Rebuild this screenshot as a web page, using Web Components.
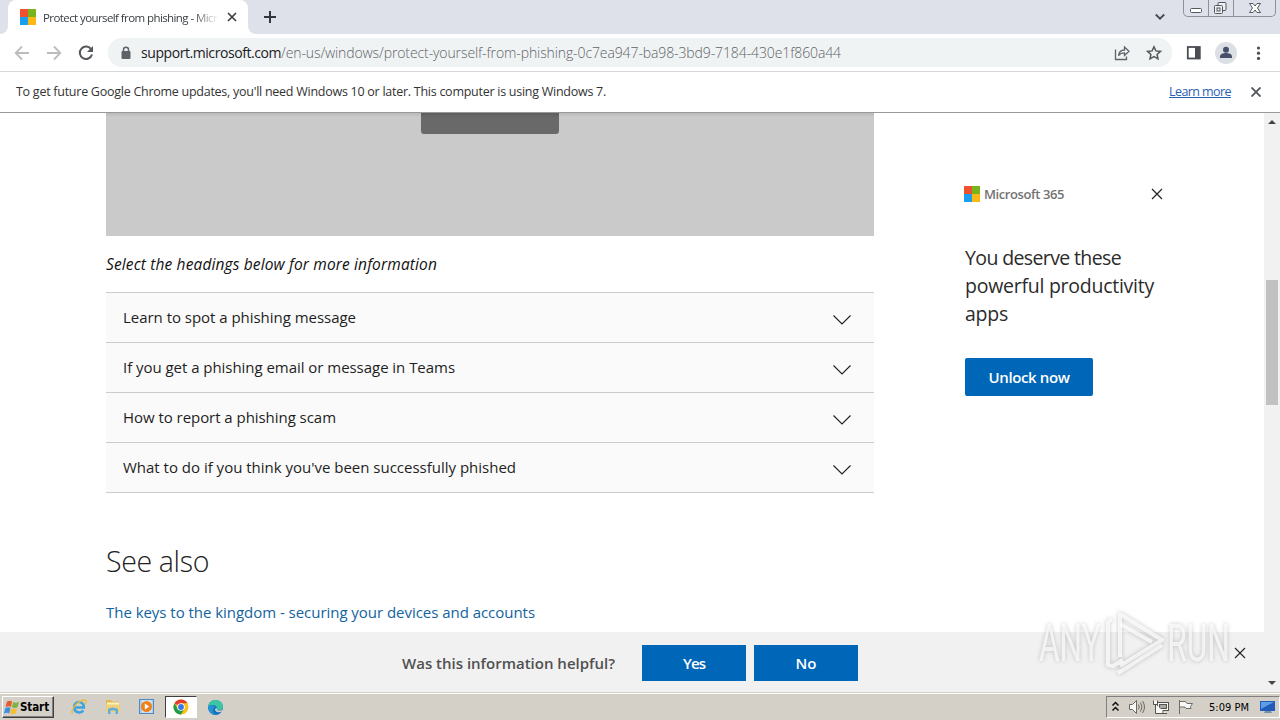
<!DOCTYPE html>
<html lang="en">
<head>
<meta charset="utf-8">
<title>Protect yourself from phishing</title>
<style>
  body {
    margin: 0;
    width: 1280px;
    height: 720px;
    overflow: hidden;
    background: white;
    font-family: "Open Sans", sans-serif;
  }
</style>
</head>
<body>
<desktop-screen>
  <tab-strip></tab-strip>
  <tool-bar></tool-bar>
  <info-bar></info-bar>
  <browser-page></browser-page>
  <task-bar></task-bar>
</desktop-screen>

<script>
// every element gets an open shadow root filled from a template
class BaseElement extends HTMLElement {
  constructor(){
    super();
    const template = document.createElement('template');
    template.innerHTML = this.html();
    this.root = this.attachShadow({mode: 'open'});
    this.root.appendChild(template.content.cloneNode(true));
  }
}

class DesktopScreen extends BaseElement {
  html(){
    return `
    <style>
      :host {
        display: grid;
        grid-template-rows: 34px 38px 41px 579px 28px;
        height: 720px;
        width: 1280px;
      }
    </style>
    <slot></slot>`;
  }
}

class MsLogo extends BaseElement {
  html(){
    return `
    <style>
      :host {
        display: grid;
        flex: none;
        grid-template-columns: 1fr 1fr;
        height: 16px;
        width: 16px;
      }
      i:nth-of-type(1) { background: #ee5130; }
      i:nth-of-type(2) { background: #78b51c; }
      i:nth-of-type(3) { background: #1a9ff0; }
      i:nth-of-type(4) { background: #fdb813; }
    </style>
    <i></i><i></i><i></i><i></i>`;
  }
}

class TabStrip extends BaseElement {
  html(){
    return `
    <style>
      :host {
        background: #dee1e9;
        display: flex;
        overflow: hidden;
      }
      .corner {
        align-self: flex-end;
        background: white;
        height: 8px;
        width: 8px;
      }
      .corner::before {
        background: #dee1e9;
        content: '';
        display: block;
        height: 8px;
      }
      .left::before { border-radius: 0 0 8px 0; }
      .right::before { border-radius: 0 0 0 8px; }
      .tab {
        align-items: center;
        background: white;
        border-radius: 8px 8px 0 0;
        box-sizing: border-box;
        display: flex;
        height: 34px;
        padding-left: 12px;
        width: 240px;
      }
      .title {
        color: #3c4043;
        font-size: 11.5px;
        margin-left: 7px;
        -webkit-mask-image: linear-gradient(90deg, #000 150px, transparent 176px);
        width: 176px;
      }
      .tab svg { margin-left: 8px; }
      .plus { margin: 10px 0 0 7px; }
      .down { margin: 12px 17px 0 auto; }
      .caption {
        border: 1px solid #8d919b;
        border-radius: 0 0 5px 5px;
        border-top: none;
        box-sizing: border-box;
        display: grid;
        grid-template-columns: 24px 25px 1fr;
        height: 17px;
        margin-right: 4px;
        width: 93px;
      }
      .caption span {
        border-left: 1px solid #8d919b;
        display: flex;
        justify-content: center;
      }
      .caption span:first-child { border: none; }
    </style>
    <div class="corner left"></div>
    <div class="tab">
      <ms-logo></ms-logo>
      <div class="title"><fit-text width="174">Protect yourself from phishing - Micr</fit-text></div>
      <svg width="10" height="10" viewBox="0 0 10 10"><path d="M1 1l8 8M9 1L1 9" stroke="#3c4043" stroke-width="1.7"/></svg>
    </div>
    <div class="corner right"></div>
    <svg class="plus" width="14" height="14" viewBox="0 0 14 14"><path d="M7 1v12M1 7h12" stroke="#33363b" stroke-width="2"/></svg>
    <svg class="down" width="12" height="10" viewBox="0 0 12 10"><path d="M1.800 2.500L6 6.700l4.200-4.200" fill="none" stroke="#45484d" stroke-width="1.8"/></svg>
    <div class="caption">
      <span><svg width="14" height="16"><rect x="1.500" y="8.500" width="11" height="4" rx="1" fill="white" stroke="#55585f"/></svg></span>
      <span><svg width="14" height="16" fill="#eef0f4" stroke="#55585f"><rect x="4" y="2.500" width="8" height="8" rx="1"/><rect x=".5" y="5.500" width="8" height="8" rx="1"/><rect x="3" y="8" width="3" height="3"/></svg></span>
      <span><svg width="14" height="16"><path d="M1.500 3.500h3.500l2 2.500 2-2.500h3.500L9.500 8l3 4.500H9l-2-2.500-2 2.500H1.500L4.500 8z" fill="white" stroke="#55585f"/></svg></span>
    </div>`;
  }
}

class ToolBar extends BaseElement {
  html(){
    return `
    <style>
      :host {
        align-items: center;
        background: white;
        border-bottom: 1px solid #d5d7da;
        box-sizing: border-box;
        display: flex;
        padding-left: 14px;
      }
      svg { display: block; flex: none; }
      .nav { display: flex; gap: 16px; }
      .address {
        align-items: center;
        background: #f0f3f4;
        border-radius: 14px;
        box-sizing: border-box;
        display: flex;
        height: 29px;
        margin-left: 14px;
        padding: 0 10px 0 12px;
        width: 1064px;
      }
      .url {
        color: #5f6368;
        display: flex;
        font-size: 14px;
        font-weight: 300;
        margin-left: 9px;
      }
      b { color: #202124; font-weight: 400; }
      .share { margin: 0 16px 0 auto; }
      .panel { margin-left: 14px; }
      .avatar { margin-left: 14px; }
      .dots { margin-left: 18px; }
    </style>
    <div class="nav">
      <svg width="16" height="16" viewBox="0 0 16 16" fill="none" stroke="#babcbe" stroke-width="1.8"><path d="M15 8H2M8 1.500L1.700 8 8 14.500"/></svg>
      <svg width="16" height="16" viewBox="0 0 16 16" fill="none" stroke="#babcbe" stroke-width="1.800"><path d="M1 8h13M8 1.500L14.300 8 8 14.500"/></svg>
      <svg width="16" height="16" viewBox="0 0 16 16"><path d="M13.300 4.500A6.200 6.200 0 1 0 14 9.500" fill="none" stroke="#55585c" stroke-width="2"/><path d="M15 1v6H9z" fill="#55585c"/></svg>
    </div>
    <div class="address">
      <svg width="12" height="14" viewBox="0 0 12 14"><rect x="1.500" y="5" width="9" height="8" rx="1" fill="#5f6368"/><path d="M3.500 6V3.800a2.500 2.500 0 0 1 5 0V6" fill="none" stroke="#5f6368" stroke-width="1.500"/></svg>
      <div class="url"><b><fit-text width="140">support.microsoft.com</fit-text></b><fit-text width="560">/en-us/windows/protect-yourself-from-phishing-0c7ea947-ba98-3bd9-7184-430e1f860a44</fit-text></div>
      <svg class="share" width="16" height="16" viewBox="0 0 16 16" fill="none" stroke="#5f6368" stroke-width="1.300"><path d="M1.500 4.500v10h11v-3"/><path d="M4.500 10.500c.5-3.500 2.500-5.500 6-5.500V2l4.500 4.300-4.500 4.200V7.800c-2.500 0-4.500.7-6 2.700z"/></svg>
      <svg width="16" height="16" viewBox="0 0 16 16"><path d="M8 1.800l1.900 4.100 4.500.5-3.300 3 .9 4.400L8 11.600l-4 2.200.9-4.400-3.300-3 4.500-.5z" fill="none" stroke="#55585c" stroke-width="1.500"/></svg>
    </div>
    <svg class="panel" width="15" height="14" viewBox="0 0 15 14"><rect x="1.800" y="1" width="12" height="11.500" fill="white" stroke="#4a4d51" stroke-width="1.800"/><path d="M9 1h5v11.500H9z" fill="#4a4d51"/></svg>
    <svg class="avatar" width="22" height="22" viewBox="0 0 22 22"><circle cx="11" cy="11" r="11" fill="#dcdfe4"/><circle cx="11" cy="7.700" r="3" fill="#46506d"/><path d="M5 16v-1.500c0-2.500 3-3.500 6-3.500s6 1 6 3.500V16z" fill="#46506d"/></svg>
    <svg class="dots" width="6" height="16" fill="#4a4d51"><circle cx="3.500" cy="3" r="1.600"/><circle cx="3.500" cy="8.200" r="1.600"/><circle cx="3.500" cy="13.400" r="1.600"/></svg>`;
  }
}

class InfoBar extends BaseElement {
  html(){
    return `
    <style>
      :host {
        align-items: center;
        background: white;
        border-bottom: 1px solid #999;
        box-sizing: border-box;
        color: #333;
        display: flex;
        font-size: 12.5px;
        padding: 0 19px 1px 16px;
      }
      a {
        color: #2a5fb4;
        margin-left: auto;
      }
      a fit-text { text-decoration: underline; }
      svg { margin-left: 20px; }
    </style>
    <fit-text width="590">To get future Google Chrome updates, you'll need Windows 10 or later. This computer is using Windows 7.</fit-text>
    <a><fit-text width="62">Learn more</fit-text></a>
    <svg width="10" height="10" viewBox="0 0 10 10"><path d="M.5.5l9 9M9.500.5l-9 9" stroke="#55585c" stroke-width="1.900"/></svg>`;
  }
}

class AccordionRow extends BaseElement {
  html(){
    return `
    <style>
      :host {
        align-items: center;
        background: #fafafa;
        border-bottom: 1px solid #ccc;
        box-sizing: border-box;
        color: #1e1e1e;
        display: flex;
        font-size: 15px;
        height: 50px;
        justify-content: space-between;
        padding: 0 22px 2px 17px;
      }
      svg { margin-top: 6px; }
    </style>
    <slot></slot>
    <svg width="20" height="12" viewBox="0 0 20 12"><path d="M1.500 1.500L10 10l8.500-8.500" fill="none" stroke="#1e1e1e" stroke-width="1.100"/></svg>`;
  }
}

class BlueButton extends BaseElement {
  html(){
    return `
    <style>
      :host {
        align-items: center;
        background: #0067b8;
        color: white;
        display: flex;
        font-size: 15px;
        font-weight: 600;
        height: 36px;
        justify-content: center;
        width: 104px;
      }
    </style>
    <slot></slot>`;
  }
}

class PromoCard extends BaseElement {
  html(){
    return `
    <style>
      :host { display: block; width: 200px; }
      header {
        align-items: center;
        color: #737373;
        display: flex;
        font-size: 13px;
        font-weight: 600;
        height: 20px;
        margin-left: -1px;
      }
      header fit-text { margin-left: 4px; }
      header svg { margin-left: 87px; }
      p {
        color: #2b2b2b;
        font-size: 19.5px;
        line-height: 28px;
        margin: 40px 0 30px;
      }
      blue-button { border-radius: 2px; height: 38px; width: 128px; }
    </style>
    <header>
      <ms-logo></ms-logo>
      <fit-text width="80">Microsoft 365</fit-text>
      <svg width="12" height="12" viewBox="0 0 12 12"><path d="M1 1l10 10M11 1L1 11" stroke="#222" stroke-width="1.200"/></svg>
    </header>
    <p>
      <fit-text width="156">You deserve these</fit-text><br>
      <fit-text width="189">powerful productivity</fit-text><br>
      <fit-text width="43">apps</fit-text>
    </p>
    <blue-button><fit-text width="81">Unlock now</fit-text></blue-button>`;
  }
}

class ScrollBar extends BaseElement {
  html(){
    return `
    <style>
      :host {
        align-items: center;
        background: #f1f1f1;
        display: flex;
        flex-direction: column;
        width: 16px;
      }
      i {
        border: 4px solid transparent;
        border-top-width: 0;
        border-bottom: 4px solid #444;
        margin-top: 7px;
      }
      .thumb {
        background: #c1c1c1;
        height: 125px;
        margin: 156px 0 auto;
        width: 12px;
      }
      .end { margin: 0 0 7px; transform: rotate(180deg); }
    </style>
    <i></i><div class="thumb"></div><i class="end"></i>`;
  }
}

class FeedbackBar extends BaseElement {
  html(){
    return `
    <style>
      :host {
        align-items: center;
        background: #f1f1f1;
        box-sizing: border-box;
        color: #505050;
        display: flex;
        font-size: 15px;
        font-weight: 600;
        height: 60px;
        padding: 2px 18px 0 402px;
      }
      .yes { margin: 0 8px 0 27px; }
      svg { margin: -21px 0 0 auto; }
    </style>
    <fit-text width="213">Was this information helpful?</fit-text>
    <blue-button class="yes"><fit-text width="22">Yes</fit-text></blue-button>
    <blue-button><fit-text width="21">No</fit-text></blue-button>
    <svg width="12" height="12" viewBox="0 0 12 12"><path d="M1 1l10 10M11 1L1 11" stroke="#222" stroke-width="1.100"/></svg>`;
  }
}

class WaterMark extends BaseElement {
  html(){
    return `
    <style>
      :host {
        display: block;
        font-family: Roboto, sans-serif;
        height: 76px;
        width: 230px;
      }
      svg {
        display: block;
        filter: drop-shadow(0 0 2px rgb(0,0,0,0.3));
        overflow: visible;
      }
    </style>
    <svg width="230" height="76" viewBox="0 0 230 76" fill="white" fill-opacity="0.7">
      <g transform="scale(0.620 1)">
        <text x="8" y="54" font-size="51">ANY</text>
        <text x="215" y="54" font-size="51">RUN</text>
      </g>
      <g fill="none" stroke="white" stroke-opacity="0.75" stroke-width="4" stroke-linejoin="round">
        <path d="M86 50V7l42 26-42 26"/>
        <path d="M78 12l-4 3v43l5 1 10-6M86 17l32 18"/>
        <path d="M84 66l44-28"/>
      </g>
    </svg>`;
  }
}

class BrowserPage extends BaseElement {
  html(){
    return `
    <style>
      :host {
        background: white;
        display: grid;
        grid-template-columns: 1264px 16px;
        grid-template-rows: 579px;
        position: relative;
      }
      .view {
        display: grid;
        grid-template-rows: 519px 60px;
        overflow: hidden;
      }
      .content {
        display: grid;
        grid-template-columns: 768px 200px;
        column-gap: 91px;
        overflow: hidden;
        padding-left: 106px;
      }
      .video {
        background: linear-gradient(#b9b9b9, #cacaca 4px);
        display: flex;
        height: 123px;
        justify-content: center;
      }
      .video div {
        background: linear-gradient(#5d5d5d, #696969 4px);
        border-radius: 0 0 3px 3px;
        height: 21px;
        width: 138px;
      }
      em {
        color: #111;
        display: block;
        font-size: 15.5px;
        height: 20px;
        line-height: 20px;
        margin: 18px 0;
      }
      .list { border-top: 1px solid #ccc; }
      h2 {
        color: #222;
        font-size: 28.5px;
        font-weight: 300;
        line-height: 36px;
        margin: 50px 0 23px;
      }
      a {
        color: #12639e;
        display: block;
        font-size: 15px;
        line-height: 20px;
      }
      promo-card { margin-top: 71px; }
      water-mark {
        left: 1034px;
        pointer-events: none;
        position: absolute;
        top: 494px;
      }
    </style>
    <div class="view">
      <div class="content">
        <main>
          <div class="video"><div></div></div>
          <em><fit-text width="331">Select the headings below for more information</fit-text></em>
          <div class="list">
            <accordion-row><fit-text width="233">Learn to spot a phishing message</fit-text></accordion-row>
            <accordion-row><fit-text width="332">If you get a phishing email or message in Teams</fit-text></accordion-row>
            <accordion-row><fit-text width="213">How to report a phishing scam</fit-text></accordion-row>
            <accordion-row><fit-text width="393">What to do if you think you've been successfully phished</fit-text></accordion-row>
          </div>
          <h2><fit-text width="103">See also</fit-text></h2>
          <a><fit-text width="429">The keys to the kingdom - securing your devices and accounts</fit-text></a>
        </main>
        <promo-card></promo-card>
      </div>
      <feedback-bar></feedback-bar>
    </div>
    <scroll-bar></scroll-bar>
    <water-mark></water-mark>`;
  }
}

class TaskBar extends BaseElement {
  html(){
    return `
    <style>
      :host {
        align-items: center;
        background: #d4d0c8;
        border-top: 1px solid #d4d0c8;
        box-shadow: inset 0 1px white;
        box-sizing: border-box;
        display: flex;
        font-family: "DejaVu Sans Condensed", "DejaVu Sans", sans-serif;
        padding: 1px 0 0 2px;
      }
      svg { display: block; flex: none; }
      .start {
        align-items: center;
        border: 1px solid;
        border-color: white #404040 #404040 white;
        box-shadow: inset -1px -1px #808080;
        box-sizing: border-box;
        display: flex;
        font-size: 11.5px;
        font-weight: bold;
        height: 22px;
        width: 52px;
      }
      .icons {
        align-items: center;
        display: flex;
        margin-left: 8px;
      }
      .icons span {
        align-items: center;
        box-sizing: border-box;
        display: flex;
        height: 22px;
        justify-content: center;
        width: 34px;
      }
      .icons .active {
        background: white;
        border: 1px solid;
        border-color: #404040 white white #404040;
        margin: 0 1px;
        width: 32px;
      }
      .tray {
        align-items: center;
        border: 1px solid;
        border-color: #808080 white white #808080;
        box-sizing: border-box;
        display: flex;
        font-size: 11px;
        height: 22px;
        margin-left: auto;
        padding-left: 4px;
        width: 174px;
      }
    </style>
    <div class="start">
      <svg width="17" height="17" viewBox="0 0 17 17">
        <path d="M4 2.500q3-1.500 5 0L8 8q-2-1.500-5.500 0z" fill="#e8592b"/>
        <path d="M10 3q3 1.500 6 0l-1.500 5.200q-3 1.500-5.500 0z" fill="#7cb342"/>
        <path d="M2.300 9q3-1.500 5.200 0L6.200 14.500q-2-1.500-5.200 0z" fill="#3e8ede"/>
        <path d="M8.500 9.300q3 1.500 5.700 0l-1.500 5q-3 1.700-5.500 0z" fill="#f7bf2d"/>
      </svg>
      <fit-text width="29">Start</fit-text>
    </div>
    <div class="icons">
      <span><svg width="18" height="18" viewBox="0 0 18 18" fill="none"><path d="M4.500 9.500h9.300C14 2 4 2.500 4.200 9.500c0 5.500 7 6.500 9 2.800" stroke="#3ba3e3" stroke-width="2.600"/><path d="M3 15C-1 15.500 6 3 14 2c3-.3 2.500 2.500 1 4.500" stroke="#edbb38" stroke-width="1.300"/></svg></span>
      <span><svg width="18" height="18" viewBox="0 0 18 18"><path d="M2 2h5l1 1.500h7V14H2z" fill="#dfb94f"/><path d="M3 4.500h12V8H3z" fill="#fdf2bd"/><path d="M2 6.500h14V14H2z" fill="#ecd07a"/><path d="M4 16v-5q5-3 10 0v5h-2.500v-3.500h-5V16z" fill="#62addb"/></svg></span>
      <span><svg width="18" height="18" viewBox="0 0 18 18"><rect x="1.500" y="1.500" width="14" height="14" fill="#acd1ef" stroke="#4f89be"/><rect x="4" y="2.500" width="9.500" height="12" fill="#d9ecfa"/><circle cx="8.500" cy="8.500" r="5.500" fill="#f08019"/><path d="M6.800 5.500l4.500 3-4.500 3z" fill="white"/></svg></span>
      <span class="active"><svg width="16" height="16" viewBox="0 0 16 16"><circle cx="8" cy="8" r="7.500" fill="#fbc116"/><path d="M8 8L1.500 4.250A7.500 7.500 0 0 1 14.500 4.250H8z" fill="#e33b2e"/><path d="M1.500 4.250A7.500 7.500 0 0 0 8 15.500L11.250 9.900 8 8 4.700 9.800z" fill="#229a4b"/><circle cx="8" cy="8" r="3.800" fill="white"/><circle cx="8" cy="8" r="2.900" fill="#3975e6"/></svg></span>
      <span><svg width="17" height="17" viewBox="0 0 17 17"><circle cx="8.500" cy="8.500" r="7.500" fill="#1474bf"/><path d="M1 8C1.500 3 5 1 8.500 1 13 1 16 4 16 7.500c0 3-2.500 4-5 3.500-1.500-.3-1.500-1-1-2C10.500 6.500 4.500 4 1 8z" fill="#3cc5a2"/><path d="M10 9c-.7 2 1 2.700 3 2.500 1.200 0 2-.5 2.500-1l-.5 2c-2 1-7 1.500-7-2.500z" fill="#d4d0c8"/><path d="M1 8c0 4 4 8 8 8-4-2-4-6-1-8.500C5.500 5.500 2 6 1 8z" fill="#2393d3"/></svg></span>
    </div>
    <div class="tray">
      <svg width="9" height="12" viewBox="0 0 9 12" fill="none" stroke="#111" stroke-width="1.500"><path d="M1.500 4.500l3-3 3 3M1.500 9.500l3-3 3 3"/></svg>
      <svg style="margin-left:8px" width="18" height="16" viewBox="0 0 18 16" fill="none" stroke="#6a6862"><path d="M1.500 5.500h3l4-4v13l-4-4h-3z" fill="#f8f8f6"/><path d="M10.500 5.500q1.500 2.500 0 5M12.500 3.500q3 4.500 0 9M14.500 2q4 6 0 12"/></svg>
      <svg style="margin-left:6px" width="18" height="16" viewBox="0 0 18 16" fill="#f8f8f6" stroke="#55534e"><rect x="5.500" y="3.500" width="11" height="8"/><rect x="7.500" y="5.500" width="7" height="4" fill="#aaa8a2"/><path d="M1.500 1.500v4h4v-4M3.500 5.500v9h11M8 14.500h7M11 11.500v3"/></svg>
      <svg style="margin-left:7px" width="17" height="16" viewBox="0 0 17 16" fill="#f8f8f6" stroke="#6e6c67"><path d="M2.500 1v14M2.500 2.500h6l1.500 2h5.500l-2 3 .5 2h-5l-1-1.500H2.500z"/></svg>
      <fit-text width="40" style="margin-left:15px">5:09 PM</fit-text>
      <svg style="margin-left:11px" width="16" height="16" viewBox="0 0 16 16"><path d="M0 2h15v10H0z" fill="#215cba"/><path d="M1 3h13L1 10z" fill="#5e9de6"/><path d="M5 12h6l1 2H4z" fill="#7390ad"/></svg>
    </div>`;
  }
}

// one line of text, spaced out to the width attribute
class FitText extends BaseElement {
  html(){
    return `
    <style>
      :host {
        display: inline-block;
        white-space: nowrap;
      }
    </style>
    <slot></slot>`;
  }

  connectedCallback(){
    const natural = this.getBoundingClientRect().width;
    const wanted = Number(this.getAttribute('width'));
    if(natural > 0){
      this.style.letterSpacing = (wanted - natural) / this.textContent.length + 'px';
    }
  }
}

customElements.define('desktop-screen', DesktopScreen);
customElements.define('ms-logo', MsLogo);
customElements.define('accordion-row', AccordionRow);
customElements.define('blue-button', BlueButton);
customElements.define('promo-card', PromoCard);
customElements.define('scroll-bar', ScrollBar);
customElements.define('feedback-bar', FeedbackBar);
customElements.define('water-mark', WaterMark);
customElements.define('tab-strip', TabStrip);
customElements.define('tool-bar', ToolBar);
customElements.define('info-bar', InfoBar);
customElements.define('browser-page', BrowserPage);
customElements.define('task-bar', TaskBar);
customElements.define('fit-text', FitText);
</script>
</body>
</html>
